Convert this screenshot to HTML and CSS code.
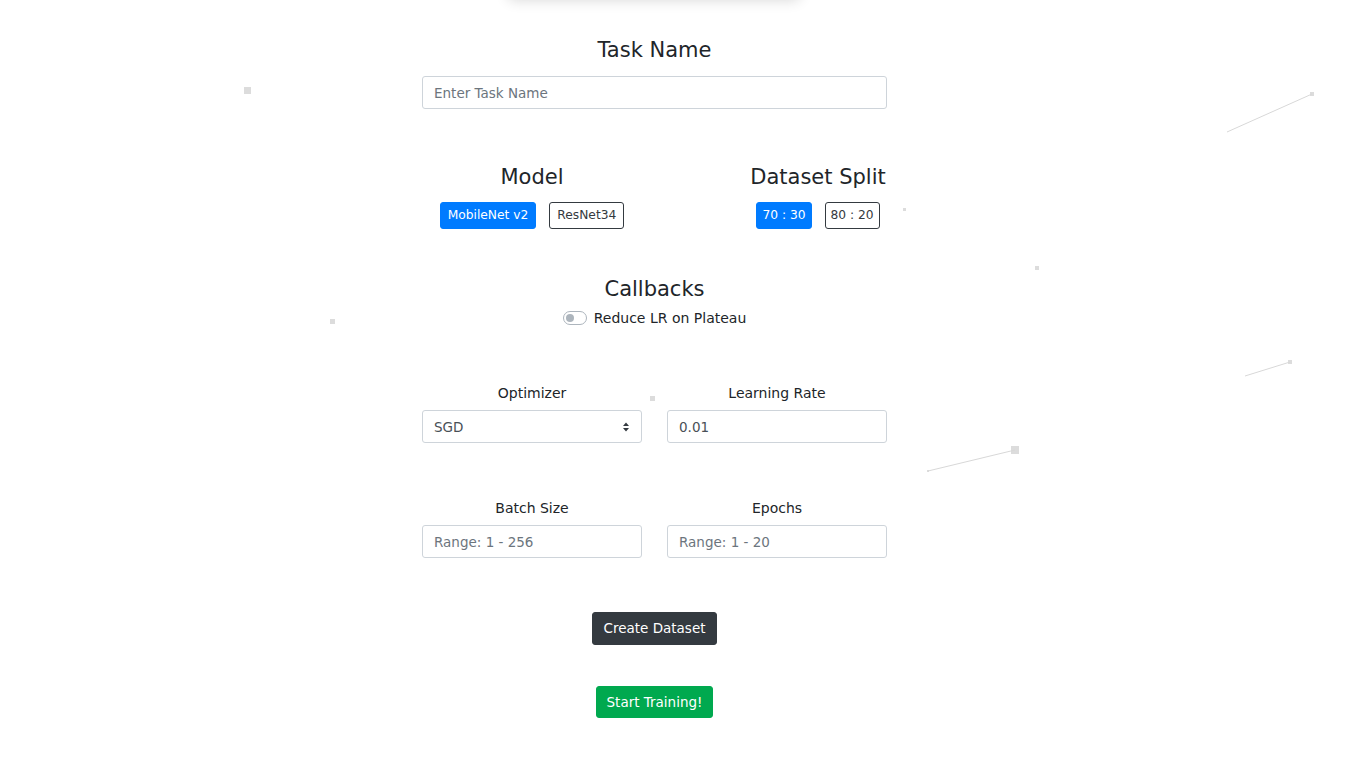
FILE: index.html
```html
<!DOCTYPE html>
<html lang="en">
<head>
<meta charset="utf-8">
<title>Training</title>
<link rel="stylesheet" href="styles.css">
</head>
<body>
<svg class="particles" width="1345" height="758" viewBox="0 0 1345 758" aria-hidden="true">
  <g fill="#dcdcdc">
    <rect x="244" y="87" width="7" height="7"/>
    <rect x="330" y="319" width="5" height="5"/>
    <rect x="650" y="396" width="5" height="5"/>
    <rect x="903" y="208" width="3" height="3"/>
    <rect x="1035" y="266" width="4" height="4"/>
    <rect x="1310" y="92" width="4" height="4"/>
    <rect x="1288" y="360" width="4" height="4"/>
    <rect x="1011" y="446" width="8" height="8"/>
    <rect x="927" y="470" width="2" height="2"/>
  </g>
  <g stroke="#d8d8d8" stroke-width="1">
    <line x1="1312" y1="94" x2="1227" y2="132"/>
    <line x1="1290" y1="362" x2="1245" y2="376"/>
    <line x1="1015" y1="450" x2="928" y2="471"/>
  </g>
</svg>
<div class="topcard"></div>
<main class="main">
  <section class="block">
    <h4 class="title">Task Name</h4>
    <input class="form-control" type="text" placeholder="Enter Task Name">
  </section>

  <section class="row-choices">
    <div class="choice-col model-col">
      <h4 class="title">Model</h4>
      <div class="btn-row">
        <button class="btn btn-sm btn-primary">MobileNet v2</button>
        <button class="btn btn-sm btn-outline">ResNet34</button>
      </div>
    </div>
    <div class="choice-col split-col">
      <h4 class="title">Dataset Split</h4>
      <div class="btn-row">
        <button class="btn btn-sm btn-primary">70 : 30</button>
        <button class="btn btn-sm btn-outline">80 : 20</button>
      </div>
    </div>
  </section>

  <section class="callbacks">
    <h4 class="title">Callbacks</h4>
    <label class="switch">
      <span class="track"><span class="knob"></span></span>
      <span class="switch-label">Reduce LR on Plateau</span>
    </label>
  </section>

  <section class="field-row first-row">
    <div class="field">
      <label class="field-label">Optimizer</label>
      <div class="select">
        <span class="select-value">SGD</span>
        <svg class="select-arrow" width="8" height="10" viewBox="0 0 8 10"><path d="M4 0.5 L7 4 H1 Z M4 9.5 L7 6 H1 Z" fill="#343a40"/></svg>
      </div>
    </div>
    <div class="field">
      <label class="field-label">Learning Rate</label>
      <input class="form-control value" type="text" value="0.01">
    </div>
  </section>

  <section class="field-row second-row">
    <div class="field">
      <label class="field-label">Batch Size</label>
      <input class="form-control" type="text" placeholder="Range: 1 - 256">
    </div>
    <div class="field">
      <label class="field-label">Epochs</label>
      <input class="form-control" type="text" placeholder="Range: 1 - 20">
    </div>
  </section>

  <div class="actions">
    <button class="btn btn-dark">Create Dataset</button>
    <button class="btn btn-success">Start Training!</button>
  </div>
</main>
</body>
</html>
```
FILE: styles.css
```css
html { font-size: 14px; }
body {
  margin: 0;
  font-family: "DejaVu Sans", "Liberation Sans", sans-serif;
  color: #212529;
  background: #fff;
  width: 1345px;
  height: 758px;
  overflow: hidden;
  position: relative;
}
.particles {
  position: absolute;
  left: 0;
  top: 0;
  z-index: 0;
}
.topcard {
  position: absolute;
  left: 508px;
  top: -60px;
  width: 292px;
  height: 58px;
  background: #fff;
  border-radius: 6px;
  box-shadow: 0 2px 14px rgba(0,0,0,0.16);
}
.main {
  position: relative;
  z-index: 1;
  width: 465px;
  margin: 0 0 0 422px;
  padding-top: 38px;
  box-sizing: border-box;
}
.title {
  margin: 0;
  font-size: 21px;
  font-weight: 500;
  line-height: 25px;
  text-align: center;
  color: #212529;
}
.block .title { margin-bottom: 13px; }
.form-control {
  display: block;
  width: 100%;
  box-sizing: border-box;
  height: 33px;
  padding: 0 11px;
  font-family: inherit;
  font-size: 13.5px;
  color: #495057;
  background: #fff;
  border: 1px solid #ced4da;
  border-radius: 3px;
  outline: none;
}
.form-control::placeholder { color: #6c757d; opacity: 1; }
.row-choices {
  display: flex;
  margin-top: 56px;
}
.choice-col { display: flex; flex-direction: column; align-items: center; flex-shrink: 0; }
.model-col { width: 220px; }
.split-col { width: 200px; margin-left: 76px; }
.choice-col .title { margin-bottom: 12px; }
.btn-row { display: flex; gap: 13px; }
.btn {
  font-family: inherit;
  border-radius: 3px;
  border: 1px solid transparent;
  cursor: pointer;
  line-height: 1.5;
}
.btn-sm {
  font-size: 12.25px;
  padding: 3px 7px;
  height: 27px;
}
.split-col .btn-sm { padding: 3px 5px; }
.btn-primary { background: #007bff; border-color: #007bff; color: #fff; }
.btn-outline { background: #fff; border-color: #343a40; color: #343a40; }
.callbacks {
  margin-top: 48px;
  display: flex;
  flex-direction: column;
  align-items: center;
}
.switch {
  margin-top: 5px;
  display: flex;
  align-items: center;
  gap: 7px;
  height: 21px;
}
.track {
  width: 22px;
  height: 12px;
  border: 1px solid #adb5bd;
  border-radius: 7px;
  position: relative;
  background: #fff;
}
.knob {
  position: absolute;
  left: 2px;
  top: 2px;
  width: 8px;
  height: 8px;
  border-radius: 50%;
  background: #adb5bd;
}
.switch-label { font-size: 14px; color: #212529; }
.field-row {
  display: flex;
  justify-content: space-between;
}
.first-row { margin-top: 55px; }
.second-row { margin-top: 55px; }
.field { width: 220px; display: flex; flex-direction: column; align-items: center; }
.field-label {
  font-size: 14px;
  line-height: 21px;
  margin-bottom: 6px;
  text-align: center;
}
.select {
  width: 100%;
  box-sizing: border-box;
  height: 33px;
  border: 1px solid #ced4da;
  border-radius: 3px;
  display: flex;
  align-items: center;
  justify-content: space-between;
  padding: 0 11px;
  font-size: 13.5px;
  color: #495057;
}
.value { color: #495057; }
.actions {
  margin-top: 54px;
  display: flex;
  flex-direction: column;
  align-items: center;
  gap: 41px;
}
.btn-dark {
  background: #343a40;
  border-color: #343a40;
  color: #fff;
  font-size: 13.5px;
  height: 33px;
  padding: 0 10px;
}
.btn-success {
  background: #00a94f;
  border-color: #00a94f;
  color: #fff;
  font-size: 13.5px;
  height: 32px;
  padding: 0 10px;
}
```
